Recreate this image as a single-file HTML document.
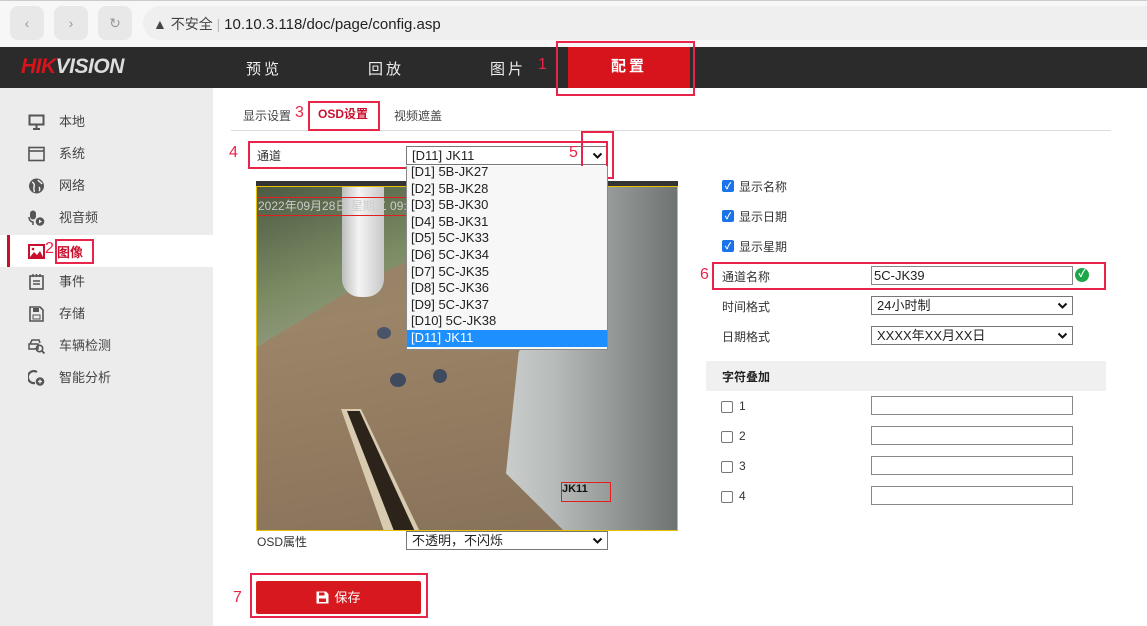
<!DOCTYPE html>
<html><head><meta charset="utf-8"><style>
*{box-sizing:border-box;margin:0;padding:0}
body{width:1147px;height:626px;overflow:hidden;background:#fff;font-family:"Liberation Sans","Noto Sans CJK SC",sans-serif;font-size:12px;color:#333;position:relative}
.a{position:absolute}
.rb{position:absolute;border:2px solid #e8244a}
.rn{position:absolute;color:#e8244a;font-size:16px}
.btn{position:absolute;top:6px;width:34px;height:34px;border-radius:8px;background:#e8e8e8;color:#999;text-align:center;line-height:34px;font-size:14px}
.side div.it{position:absolute;left:0;width:213px;height:32px;line-height:32px;padding-left:59px;font-size:13px;color:#444}
.ic{position:absolute;left:28px;top:8px;width:17px;height:16px}
.sel{position:absolute;border:1px solid #777;background:#fff;height:19px;font-size:13px;line-height:17px;padding-left:5px;color:#222}
.sel svg{position:absolute;right:4px;top:5px}
.cb{position:absolute;width:12px;height:12px;border-radius:2px;background:#1a73e8;color:#fff;font-size:9px;line-height:12px;text-align:center;font-weight:bold}
.cbe{position:absolute;width:12px;height:12px;border-radius:2px;border:1px solid #767676;background:#fff}
.lbl{position:absolute;font-size:12px;color:#333}
.inp{position:absolute;left:871px;width:202px;height:19px;border:1px solid #888;background:#fff}
.dd div{height:16.6px;line-height:16.6px;padding-left:4px;font-size:13px;color:#222}
</style></head><body>
<div class="a" style="left:0;top:0;width:1147px;height:47px;background:#f7f7f7;border-top:1px solid #ccc"></div>
<div class="btn" style="left:10px">&#8249;</div>
<div class="btn" style="left:54px">&#8250;</div>
<div class="btn" style="left:98px">&#8635;</div>
<div class="a" style="left:143px;top:6px;width:1010px;height:34px;border-radius:17px 0 0 17px;background:#efefef"></div>
<div class="a" style="left:153px;top:14px;font-size:14px;color:#444">&#9650; 不安全 <span style="color:#bbb">|</span> <span style="color:#222;font-size:15px">10.10.3.118/doc/page/config.asp</span></div>
<div class="a" style="left:0;top:47px;width:1147px;height:41px;background:#2b2b2b"></div>
<div class="a" style="left:21px;top:55px;font-size:21px;font-weight:bold;font-style:italic;letter-spacing:-0.5px;color:#ddd"><span style="color:#d7141c">HIK</span>VISION</div>
<div class="a" style="left:246px;top:58px;font-size:15px;color:#eee;letter-spacing:3px">预览</div>
<div class="a" style="left:368px;top:58px;font-size:15px;color:#eee;letter-spacing:3px">回放</div>
<div class="a" style="left:490px;top:58px;font-size:15px;color:#eee;letter-spacing:3px">图片</div>
<div class="rn" style="left:538px;top:56px">1</div>
<div class="a" style="left:568px;top:47px;width:122px;height:41px;background:#d7141c;color:#fff;font-size:15px;font-weight:bold;text-align:center;line-height:40px;letter-spacing:3px">配置</div>
<div class="rb" style="left:556px;top:41px;width:139px;height:55px"></div>
<div class="a side" style="left:0;top:88px;width:213px;height:538px;background:#ececec">
<div class="it" style="top:18px"><svg class="ic" viewBox="0 0 17 16"><rect x="1.5" y="1.5" width="14" height="9" fill="none" stroke="#555" stroke-width="2"/><path d="M8.5 11v3M5 15h7" stroke="#555" stroke-width="2"/></svg>本地</div>
<div class="it" style="top:50px"><svg class="ic" viewBox="0 0 17 16"><rect x="1" y="1.5" width="15" height="13" fill="none" stroke="#555" stroke-width="1.6"/><path d="M1 5h15" stroke="#555" stroke-width="1.6"/></svg>系统</div>
<div class="it" style="top:82px"><svg class="ic" viewBox="0 0 17 16"><circle cx="8.5" cy="8" r="7.5" fill="#555"/><path d="M4 4c2 1 3 3 2 5s1 3 0 5M10 2c1 2 3 2 4 4M11 9c1 1 1 3 0 4" stroke="#ececec" stroke-width="1.5" fill="none"/></svg>网络</div>
<div class="it" style="top:114px"><svg class="ic" viewBox="0 0 17 16"><rect x="2" y="0.5" width="6" height="9" rx="3" fill="#555"/><path d="M1 7c0 4 3 5 4 5v3" stroke="#555" stroke-width="1.5" fill="none"/><circle cx="12" cy="11.5" r="4.3" fill="#555"/><path d="M11 9.5v4l3-2z" fill="#ececec"/></svg>视音频</div>
<div class="a" style="left:0;top:147px;width:213px;height:32px;background:#fff"></div>
<div class="a" style="left:7px;top:147px;width:3px;height:32px;background:#c8102e"></div>
<svg class="a" style="left:28px;top:156px" width="17" height="15" viewBox="0 0 17 15"><rect x="1" y="1" width="15" height="13" fill="none" stroke="#c8102e" stroke-width="2"/><path d="M2 13l4-5 3 3 3-4 3 6z" fill="#c8102e"/><circle cx="5" cy="5" r="1.3" fill="#c8102e"/></svg>
<div class="rn" style="left:45px;top:152px;font-size:16px">2</div>
<div class="a" style="left:57px;top:154px;font-size:13px;color:#c8102e;font-weight:bold">图像</div>
<div class="rb" style="left:55px;top:151px;width:39px;height:25px"></div>
<div class="it" style="top:178px"><svg class="ic" viewBox="0 0 17 16"><rect x="2" y="2" width="13" height="13" fill="none" stroke="#555" stroke-width="1.6"/><path d="M5 0v3M8.5 0v3M12 0v3M5 7h7M5 10h7" stroke="#555" stroke-width="1.5"/></svg>事件</div>
<div class="it" style="top:210px"><svg class="ic" viewBox="0 0 17 16"><path d="M2 1h10l3 3v11H2z" fill="none" stroke="#555" stroke-width="1.6"/><rect x="5" y="2" width="6" height="4" fill="#555"/><rect x="5" y="9" width="7" height="4" fill="none" stroke="#555"/></svg>存储</div>
<div class="it" style="top:242px"><svg class="ic" viewBox="0 0 17 16"><path d="M2 6l2-4h7l1 3M1 6h9v5H1z" fill="none" stroke="#555" stroke-width="1.5"/><circle cx="11.5" cy="10.5" r="3.2" fill="none" stroke="#555" stroke-width="1.6"/><path d="M14 13l2.5 2.5" stroke="#555" stroke-width="1.8"/></svg>车辆检测</div>
<div class="it" style="top:274px"><svg class="ic" viewBox="0 0 17 16"><path d="M9 2a6 6 0 1 0-2 11" fill="none" stroke="#555" stroke-width="2.2"/><circle cx="12" cy="11.5" r="4.3" fill="#555"/><path d="M10 11.5h4M12 9.5v4" stroke="#ececec" stroke-width="1.3"/></svg>智能分析</div>
</div>
<div class="a" style="left:243px;top:107px;font-size:12px;color:#444">显示设置</div>
<div class="rn" style="left:295px;top:104px">3</div>
<div class="a" style="left:318px;top:105px;font-size:12px;color:#c8102e;font-weight:bold">OSD设置</div>
<div class="a" style="left:394px;top:107px;font-size:12px;color:#444">视频遮盖</div>
<div class="a" style="left:231px;top:130px;width:880px;height:1px;background:#ddd"></div>
<div class="rb" style="left:308px;top:101px;width:72px;height:30px"></div>
<div class="rn" style="left:229px;top:144px">4</div>
<div class="lbl" style="left:257px;top:147px">通道</div>
<div class="sel" style="left:406px;top:146px;width:202px">[D11] JK11<svg width="11" height="8" viewBox="0 0 11 8"><path d="M1.5 1.5l4 4 4-4" stroke="#111" stroke-width="2" fill="none"/></svg></div>
<div class="rn" style="left:569px;top:144px">5</div>
<div class="rb" style="left:248px;top:141px;width:360px;height:28px"></div>
<div class="rb" style="left:581px;top:131px;width:33px;height:48px"></div>
<div class="a" style="left:256px;top:181px;width:422px;height:6px;background:#333"></div>
<div class="a" style="left:256px;top:186px;width:422px;height:345px;border:1px solid #e6c200;overflow:hidden;background:linear-gradient(170deg,#8e8068 0%,#9b8468 35%,#937b60 65%,#85705a 100%)">
 <div class="a" style="left:0;top:0;width:230px;height:200px;background:linear-gradient(160deg,#4d5a44,#7b8b63 40%,#98a088 70%);clip-path:polygon(0 0,100% 0,100% 20%,50% 45%,0 80%)"></div>
 <div class="a" style="left:85px;top:0;width:42px;height:110px;background:linear-gradient(90deg,#bdbdbd,#f4f4f4 40%,#c8c8c8);border-radius:0 0 18px 18px"></div>
 <div class="a" style="left:0;top:0;width:422px;height:345px;background:linear-gradient(90deg,#dde0e0,#eef0f0 35%,#b8bcbb 70%,#6d7270);clip-path:polygon(88% 0,100% 0,100% 100%,73% 100%,59% 83%,62% 48%,80% 0)"></div>
 <div class="a" style="left:84px;top:222px;width:80px;height:125px;background:#d8cbb0;clip-path:polygon(0 0,25% 0,100% 100%,55% 100%)"></div>
 <div class="a" style="left:90px;top:224px;width:70px;height:125px;background:#2c231b;clip-path:polygon(0 0,18% 0,100% 100%,70% 100%)"></div>
 <div class="a" style="left:120px;top:140px;width:14px;height:12px;border-radius:50%;background:#4a5468"></div>
 <div class="a" style="left:133px;top:186px;width:16px;height:14px;border-radius:50%;background:#3f4a5e"></div>
 <div class="a" style="left:176px;top:182px;width:14px;height:14px;border-radius:50%;background:#3f4a5e"></div>
 <div class="a" style="left:0;top:10px;width:230px;height:19px;border:1px solid #e02020;font-size:12px;color:#ccc;line-height:17px;white-space:nowrap">2022年09月28日 星期二 09:40:</div>
 <div class="a" style="left:304px;top:295px;width:50px;height:20px;border:1px solid #e02020;font-size:11px;color:#111;font-weight:bold">JK11</div>
</div>
<div class="a dd" style="left:406px;top:166px;width:202px;height:184px;background:#f7f7f7;border:1px solid #888;border-top:none;overflow:hidden">
<div style="margin-top:-2px">[D1] 5B-JK27</div><div>[D2] 5B-JK28</div><div>[D3] 5B-JK30</div><div>[D4] 5B-JK31</div><div>[D5] 5C-JK33</div><div>[D6] 5C-JK34</div><div>[D7] 5C-JK35</div><div>[D8] 5C-JK36</div><div>[D9] 5C-JK37</div><div>[D10] 5C-JK38</div><div style="background:#1e8fff;color:#fff">[D11] JK11</div>
</div>
<div class="lbl" style="left:257px;top:533px">OSD属性</div>
<div class="sel" style="left:406px;top:531px;width:202px">不透明，不闪烁<svg width="11" height="8" viewBox="0 0 11 8"><path d="M1.5 1.5l4 4 4-4" stroke="#111" stroke-width="2" fill="none"/></svg></div>
<div class="rn" style="left:233px;top:589px">7</div>
<div class="a" style="left:256px;top:581px;width:165px;height:33px;background:#d7191f;border-radius:2px;color:#fff;font-size:13px;text-align:center;line-height:33px"><svg width="13" height="13" viewBox="0 0 13 13" style="vertical-align:-2px;margin-right:5px"><path d="M0.5 0.5h9.5l2.5 2.5v9.5H0.5z" fill="#fff"/><rect x="3" y="1.5" width="5.5" height="3" fill="#d7191f"/><rect x="3" y="7.5" width="7" height="3.5" fill="#d7191f"/></svg>保存</div>
<div class="rb" style="left:250px;top:573px;width:178px;height:45px"></div>
<div class="cb" style="left:722px;top:180px">✓</div><div class="lbl" style="left:739px;top:178px">显示名称</div>
<div class="cb" style="left:722px;top:210px">✓</div><div class="lbl" style="left:739px;top:208px">显示日期</div>
<div class="cb" style="left:722px;top:240px">✓</div><div class="lbl" style="left:739px;top:238px">显示星期</div>
<div class="rn" style="left:700px;top:266px">6</div>
<div class="lbl" style="left:722px;top:268px">通道名称</div>
<div class="inp" style="top:266px;font-size:13px;line-height:17px;padding-left:2px;color:#222">5C-JK39</div>
<div class="a" style="left:1075px;top:268px;width:14px;height:14px;border-radius:50%;background:#1fa64a;color:#fff;font-size:10px;line-height:14px;text-align:center;font-weight:bold">✓</div>
<div class="rb" style="left:712px;top:262px;width:394px;height:28px"></div>
<div class="lbl" style="left:722px;top:298px">时间格式</div>
<div class="sel" style="left:871px;top:296px;width:202px">24小时制<svg width="11" height="8" viewBox="0 0 11 8"><path d="M1.5 1.5l4 4 4-4" stroke="#111" stroke-width="2" fill="none"/></svg></div>
<div class="lbl" style="left:722px;top:328px">日期格式</div>
<div class="sel" style="left:871px;top:326px;width:202px">XXXX年XX月XX日<svg width="11" height="8" viewBox="0 0 11 8"><path d="M1.5 1.5l4 4 4-4" stroke="#111" stroke-width="2" fill="none"/></svg></div>
<div class="a" style="left:706px;top:361px;width:400px;height:30px;background:#f0f0f0"></div>
<div class="lbl" style="left:722px;top:368px;font-weight:bold;color:#222">字符叠加</div>
<div class="cbe" style="left:721px;top:401px"></div><div class="lbl" style="left:739px;top:399px">1</div><div class="inp" style="top:396px"></div>
<div class="cbe" style="left:721px;top:431px"></div><div class="lbl" style="left:739px;top:429px">2</div><div class="inp" style="top:426px"></div>
<div class="cbe" style="left:721px;top:461px"></div><div class="lbl" style="left:739px;top:459px">3</div><div class="inp" style="top:456px"></div>
<div class="cbe" style="left:721px;top:491px"></div><div class="lbl" style="left:739px;top:489px">4</div><div class="inp" style="top:486px"></div>
</body></html>
